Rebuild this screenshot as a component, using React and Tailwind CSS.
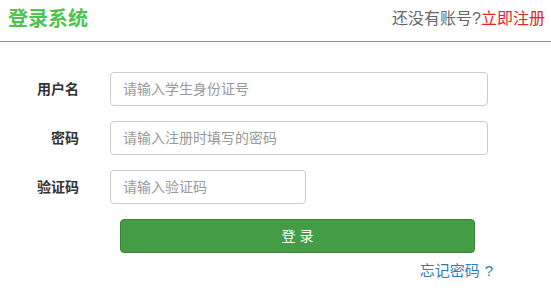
export default function App() {
  return (
    <div className="w-[551px] h-[288px] bg-white font-['Liberation_Sans','Noto_Sans_CJK_SC',sans-serif]">
      <div className="h-[41px] flex items-center justify-between pl-[8px] pr-[6px] pb-[3px]">
        <h1 className="text-[20px] font-bold text-[#4ec44e] leading-none">登录系统</h1>
        <div className="text-[16px] leading-none text-[#666]">
          还没有账号?<a className="text-[#e4252d]">立即注册</a>
        </div>
      </div>
      <div className="h-[1px] bg-[#5cb85c]" />

      <div className="pt-[30px] flex flex-col gap-[15px]">
        <div className="flex items-center">
          <label className="w-[79px] text-right text-[14px] font-bold text-[#333]">用户名</label>
          <input
            className="ml-[31px] w-[378px] h-[34px] border border-[#ccc] rounded-[4px] px-[12px] text-[14px] placeholder:text-[#999] outline-none"
            placeholder="请输入学生身份证号"
          />
        </div>
        <div className="flex items-center">
          <label className="w-[79px] text-right text-[14px] font-bold text-[#333]">密码</label>
          <input
            type="password"
            className="ml-[31px] w-[378px] h-[34px] border border-[#ccc] rounded-[4px] px-[12px] text-[14px] placeholder:text-[#999] outline-none"
            placeholder="请输入注册时填写的密码"
          />
        </div>
        <div className="flex items-center">
          <label className="w-[79px] text-right text-[14px] font-bold text-[#333]">验证码</label>
          <input
            className="ml-[31px] w-[196px] h-[34px] border border-[#ccc] rounded-[4px] px-[12px] text-[14px] placeholder:text-[#999] outline-none"
            placeholder="请输入验证码"
          />
        </div>
        <div className="pl-[120px]">
          <button className="w-[355px] h-[34px] rounded-[4px] bg-[#449d44] border border-[#398439] text-white text-[14px]">
            登 录
          </button>
        </div>
      </div>

      <div className="flex justify-end pr-[58px] pt-[8px]">
        <a className="text-[15px] leading-[20px] text-[#337ab7]">
          忘记密码<span className="ml-[5px]">?</span>
        </a>
      </div>
    </div>
  );
}
